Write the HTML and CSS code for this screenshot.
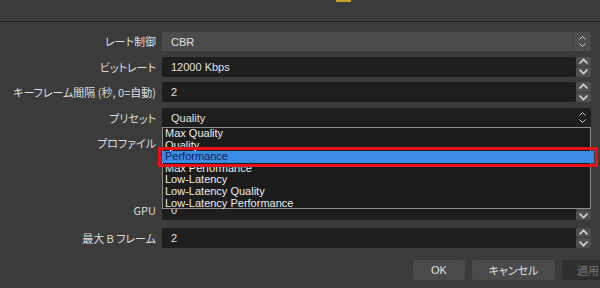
FILE: index.html
```html
<!DOCTYPE html>
<html lang="ja">
<head>
<meta charset="utf-8">
<link rel="stylesheet" href="styles.css">
</head>
<body>
<div class="top"><span class="tab-mark"></span></div>
<div class="form">
  <label class="lbl">レート制御</label>
  <div class="field combo light"><span class="val">CBR</span><span class="carrow boxed"><svg width="9" height="13" viewBox="0 0 9 13"><path d="M1.5 4.5 L4.5 1.5 L7.5 4.5 M1.5 8.5 L4.5 11.5 L7.5 8.5" fill="none" stroke="#cfcfcf" stroke-width="1"/></svg></span></div>

  <label class="lbl">ビットレート</label>
  <div class="field input"><span class="val">12000 Kbps</span></div>
  <div class="spin"><span class="sb"><svg width="11" height="7" viewBox="0 0 11 7"><path d="M1.5 5.5 L5.5 1.5 L9.5 5.5" fill="none" stroke="#d8d8d8" stroke-width="1.6"/></svg></span><span class="sb"><svg width="11" height="7" viewBox="0 0 11 7"><path d="M1.5 1.5 L5.5 5.5 L9.5 1.5" fill="none" stroke="#d8d8d8" stroke-width="1.6"/></svg></span></div>

  <label class="lbl">キーフレーム間隔 (秒, 0=自動)</label>
  <div class="field input"><span class="val">2</span></div>
  <div class="spin"><span class="sb"><svg width="11" height="7" viewBox="0 0 11 7"><path d="M1.5 5.5 L5.5 1.5 L9.5 5.5" fill="none" stroke="#d8d8d8" stroke-width="1.6"/></svg></span><span class="sb"><svg width="11" height="7" viewBox="0 0 11 7"><path d="M1.5 1.5 L5.5 5.5 L9.5 1.5" fill="none" stroke="#d8d8d8" stroke-width="1.6"/></svg></span></div>

  <label class="lbl">プリセット</label>
  <div class="field combo dark wide"><span class="val">Quality</span><span class="carrow"><svg width="9" height="13" viewBox="0 0 9 13"><path d="M1.5 4.5 L4.5 1.5 L7.5 4.5 M1.5 8.5 L4.5 11.5 L7.5 8.5" fill="none" stroke="#cfcfcf" stroke-width="1"/></svg></span></div>

  <label class="lbl">プロファイル</label>
  <div class="field combo dark wide"></div>

  <span class="gap-cell"></span>
  <div class="check"></div>
  <span class="gap-cell"></span>

  <span class="gap-cell"></span>
  <div class="check"></div>
  <span class="gap-cell"></span>

  <label class="lbl">GPU</label>
  <div class="field input"><span class="val">0</span></div>
  <div class="spin"><span class="sb"><svg width="11" height="7" viewBox="0 0 11 7"><path d="M1.5 5.5 L5.5 1.5 L9.5 5.5" fill="none" stroke="#d8d8d8" stroke-width="1.6"/></svg></span><span class="sb"><svg width="11" height="7" viewBox="0 0 11 7"><path d="M1.5 1.5 L5.5 5.5 L9.5 1.5" fill="none" stroke="#d8d8d8" stroke-width="1.6"/></svg></span></div>

  <label class="lbl last">最大 B フレーム</label>
  <div class="field input last"><span class="val">2</span></div>
  <div class="spin last"><span class="sb"><svg width="11" height="7" viewBox="0 0 11 7"><path d="M1.5 5.5 L5.5 1.5 L9.5 5.5" fill="none" stroke="#d8d8d8" stroke-width="1.6"/></svg></span><span class="sb"><svg width="11" height="7" viewBox="0 0 11 7"><path d="M1.5 1.5 L5.5 5.5 L9.5 1.5" fill="none" stroke="#d8d8d8" stroke-width="1.6"/></svg></span></div>
</div>

<ul class="popup">
  <li>Max Quality</li>
  <li>Quality</li>
  <li class="sel">Performance</li>
  <li>Max Performance</li>
  <li>Low-Latency</li>
  <li>Low-Latency Quality</li>
  <li>Low-Latency Performance</li>
</ul>

<div class="buttons">
  <button class="btn ok">OK</button>
  <button class="btn cancel">キャンセル</button>
  <button class="btn apply" disabled>適用</button>
</div>
</body>
</html>
```

FILE: styles.css
```css
html, body {
  margin: 0;
  padding: 0;
}
body {
  width: 600px;
  height: 288px;
  overflow: hidden;
  background: #3b3b3b;
  position: relative;
  font-family: "Noto Sans CJK JP", "Liberation Sans", sans-serif;
  color: #e4e4e4;
}
.top {
  height: 21px;
  border-bottom: 1px solid #272727;
  position: relative;
}
.tab-mark {
  position: absolute;
  left: 336px;
  top: 0;
  width: 15px;
  height: 2px;
  background: #c9a12c;
}
.form {
  display: grid;
  grid-template-columns: 162px 414px 15px;
  grid-template-rows: 20px 20px 20px 20px 20px 15px 15px 20px 22px;
  column-gap: 0;
  row-gap: 5.6px;
  padding-top: 9px;
}
.last { margin-top: 2px; }
.lbl {
  display: block;
  width: 156px;
  box-sizing: border-box;
  text-align: right;
  font-size: 11px;
  line-height: 20px;
  font-weight: 400;
  font-feature-settings: "palt";
  white-space: nowrap;
  color: #dedede;
}
.field {
  display: flex;
  align-items: center;
  font-family: "Liberation Sans", sans-serif;
  font-size: 11px;
  color: #e2e2e2;
  box-sizing: border-box;
  border-radius: 2px;
}
.val { padding-left: 9px; }
.input { background: #1e1e1e; }
.combo { justify-content: space-between; }
.light {
  background: #4b4b4b;
  grid-column: 2 / 4;
  height: 19px;
  margin-top: 1px;
}
.dark { background: #1e1e1e; }
.wide { grid-column: 2 / 4; }
.carrow {
  width: 17px;
  height: 100%;
  display: flex;
  align-items: center;
  justify-content: center;
}
.carrow.boxed {
  border-left: 1px solid #404040;
  background: #4d4d4d;
  border-radius: 0 2px 2px 0;
}
.carrow svg { display: block; }
.spin {
  display: flex;
  flex-direction: column;
}
.sb {
  flex: 1;
  background: #505050;
  border-radius: 2px;
  display: flex;
  align-items: center;
  justify-content: center;
}
.sb + .sb { margin-top: 1px; }
.sb svg { display: block; }
.check { height: 15px; }

.popup {
  position: absolute;
  left: 162px;
  top: 127px;
  width: 429px;
  height: 82px;
  box-sizing: border-box;
  margin: 0;
  padding: 0;
  list-style: none;
  background: #1c1c1c;
  border: 1px solid #8d8d8d;
  font-family: "Liberation Sans", sans-serif;
  font-size: 11px;
  line-height: 11.6px;
  color: #ececec;
}
.popup li {
  padding-left: 2px;
  height: 11.6px;
  white-space: nowrap;
}
.popup li.sel {
  background: #3a8be3;
  color: #14225a;
  outline: 3px solid #e8111b;
  outline-offset: 1px;
  margin: 0 -4px 0 -1px;
  padding-left: 3px;
}
.buttons {
  position: absolute;
  left: 413px;
  top: 260px;
  display: flex;
  gap: 7px;
}
.btn {
  height: 20px;
  border: none;
  border-radius: 3px;
  background: #4a4a4a;
  color: #e0e0e0;
  font-family: "Noto Sans CJK JP", sans-serif;
  font-size: 11px;
  padding: 0;
  font-feature-settings: "palt";
}
.ok { width: 52px; font-family: "Liberation Sans", sans-serif; }
.cancel { width: 83px; }
.apply { width: 52px; background: #2f2f2f; color: #777; }
```
